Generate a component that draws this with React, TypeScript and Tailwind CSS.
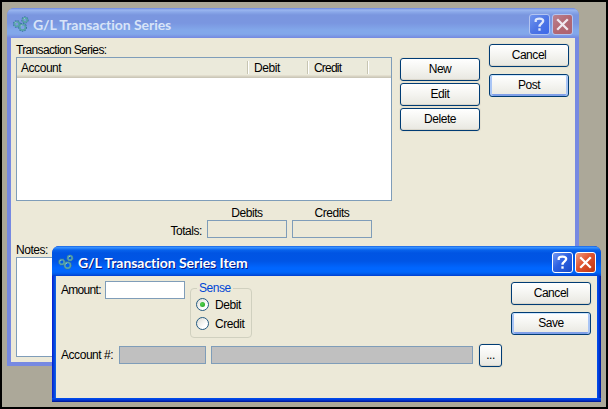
import React from "react";

const raised =
  "flex h-[23px] shrink-0 items-center justify-center rounded-[3px] border border-[#003c74] bg-gradient-to-b from-white via-[#f4f4f0] to-[#e8e7e0] pb-px text-black";

function Button({ label, focused = false, className = "w-[80px]" }: { label: string; focused?: boolean; className?: string }) {
  return (
    <button
      className={`${raised} ${className} ${
        focused
          ? "shadow-[inset_0_1px_0_#cee7ff,inset_2px_0_0_#a9c5f5,inset_-2px_0_0_#a9c5f5,inset_0_-2px_0_#7f9fe8]"
          : "shadow-[inset_0_-1px_0_#d9d6cb,0_0_0_1px_#e4e0d0]"
      }`}
    >
      {label}
    </button>
  );
}

function Gears() {
  return (
    <svg width="16" height="16" viewBox="0 0 16 16" fill="none">
      <g stroke="#34709a" strokeWidth="1.6" strokeDasharray="1.5 0.9">
        <circle cx="3.8" cy="8" r="3" />
        <circle cx="12" cy="4" r="2.8" />
        <circle cx="9.6" cy="11.3" r="3.6" />
      </g>
      <g stroke="#56a3a8" strokeWidth="1.6">
        <circle cx="3.8" cy="8" r="2.3" />
        <circle cx="12" cy="4" r="2.1" />
        <circle cx="9.6" cy="11.3" r="2.8" />
      </g>
      <path d="M2.1 7.2l1.1-1.1M7.6 10.3l1.3-1.5M10.7 3.2l1.3-1" stroke="#9acdc6" />
    </svg>
  );
}

function Caption({ title, active, titleClass }: { title: string; active: boolean; titleClass: string }) {
  const edge = active ? "border-white" : "border-[#b3c4f0]";
  return (
    <div
      className={`flex h-[30px] shrink-0 items-center rounded-t-[6px] pl-[6px] ${
        active
          ? "bg-[linear-gradient(#0a4fd8_0px,#3b95ff_1px,#3089fb_2px,#0863ec_4px,#0054e3_7px,#0055e5_15px,#0066ff_22px,#0066fc_26px,#005ae8_28px,#003dd0_30px)] pr-[5px]"
          : "bg-[linear-gradient(#6885e2_0px,#9ab6ef_2px,#8aa8e9_4px,#7a96df_7px,#7a96e0_15px,#82a7ea_22px,#82a7ea_26px,#7b98e5_28px,#7488df_30px)] pr-[6px]"
      }`}
    >
      <span className="mt-[2px]">
        <Gears />
      </span>
      <span
        className={`ml-[4px] mt-[4px] grow whitespace-nowrap font-['Lato','DejaVu_Sans_Condensed',sans-serif] text-[14px] leading-4 font-bold ${
          active ? "text-white [text-shadow:1px_1px_0_#0a1883]" : "text-[#d8e4f8]"
        } ${titleClass}`}
      >
        {title}
      </span>
      <div className="mt-[3px] flex gap-[2px]">
        <button
          className={`flex size-[21px] items-center justify-center rounded-[3px] border ${edge} ${
            active
              ? "bg-[linear-gradient(135deg,#7398f3,#2e62e2_45%,#1849c7)]"
              : "bg-[linear-gradient(135deg,#7195ee,#4e76e5_50%,#3d68e9)]"
          }`}
        >
          <svg width="19" height="19" viewBox="0 0 19 19" fill="none" stroke={active ? "white" : "#e0e8fc"} strokeWidth="2.3">
            <path d="M5.7 7V5.5C5.7 4.1 7.2 3.7 9.4 3.7S13.2 4.4 13.2 6.1C13.2 8.4 9.5 8.5 9.5 11.7" />
            <path d="M9.5 13.3v2.4" />
          </svg>
        </button>
        <button
          className={`flex size-[21px] items-center justify-center rounded-[3px] border ${edge} ${
            active
              ? "bg-[linear-gradient(135deg,#ee9c83,#e0532e_45%,#be3611)]"
              : "bg-[linear-gradient(135deg,#bb8291,#b26873_50%,#ad6272)]"
          }`}
        >
          <svg width="19" height="19" viewBox="0 0 19 19" fill="none" stroke={active ? "white" : "#f0e8f0"} strokeWidth="2.3">
            <path d="M4.2 4.2l10.6 10.6M14.8 4.2L4.2 14.8" />
          </svg>
        </button>
      </div>
    </div>
  );
}

function Radio({ label, checked = false }: { label: string; checked?: boolean }) {
  return (
    <label className="flex h-[19px] items-center gap-[6px]">
      <span className="flex size-[13px] items-center justify-center rounded-full border border-[#235a82] bg-[linear-gradient(135deg,#dcdcd4,#ffffff_70%)]">
        {checked && <span className="size-[5px] rounded-full bg-[radial-gradient(circle_at_40%_40%,#55d551,#1c991c)]" />}
      </span>
      <span>{label}</span>
    </label>
  );
}

function Column({ label, className }: { label: string; className: string }) {
  return (
    <div className={`flex h-full items-center ${className}`}>
      <span className="grow">{label}</span>
      <span className="h-[13px] w-[2px] border-r border-l border-r-white border-l-[#c7c5b2]" />
    </div>
  );
}

export default function App() {
  return (
    <div className="relative h-[409px] w-[608px] overflow-hidden border-2 border-black bg-[#aca899] pt-[6px] pl-[5px] font-['Liberation_Sans',Arial,sans-serif] text-[12px] leading-[14px] tracking-[-0.45px] text-black">
      <section className="flex h-[358px] w-[572px] flex-col overflow-hidden rounded-t-[7px] bg-[#7488df]">
        <Caption title="G/L Transaction Series" active={false} titleClass="tracking-[-0.05px]" />
        <div className="flex grow border-x-4 border-b-4 border-[#7689e2] bg-[#ece9d8]">
          <div className="flex w-[389px] shrink-0 flex-col pt-[5px] pl-[5px]">
            <span className="tracking-[-0.66px]">Transaction Series:</span>
            <div className="h-[144px] w-[376px] border border-[#7f9db9] bg-white">
              <div className="flex h-[20px] items-center border-b border-[#cbc7b8] bg-[#ebeadb] shadow-[inset_0_-1px_0_#d6d2c2,inset_0_-2px_0_#e2dece]">
                <Column label="Account" className="w-[232px] pl-[4px]" />
                <Column label="Debit" className="w-[60px] pl-[5px]" />
                <Column label="Credit" className="w-[60px] pl-[5px] tracking-[-0.8px]" />
              </div>
            </div>
            <div className="mt-[5px] flex gap-[5px] pl-[191px] text-center">
              <span className="w-[80px]">Debits</span>
              <span className="w-[80px]">Credits</span>
            </div>
            <div className="flex h-[18px] gap-[5px]">
              <span className="w-[186px] pt-[4px] text-right">Totals:</span>
              <div className="h-[18px] w-[80px] border border-[#7f9db9]" />
              <div className="h-[18px] w-[80px] border border-[#7f9db9]" />
            </div>
            <span className="mt-[5px]">Notes:</span>
            <div className="h-[100px] w-[376px] border border-[#7f9db9] bg-white" />
          </div>
          <div className="flex w-[80px] flex-col gap-[2px] pt-[20px]">
            <Button label="New" />
            <Button label="Edit" />
            <Button label="Delete" />
          </div>
          <div className="ml-[9px] flex flex-col gap-[7px] pt-[6px]">
            <Button label="Cancel" />
            <Button label="Post" focused />
          </div>
        </div>
      </section>

      <section className="absolute top-[244px] left-[50px] flex h-[156px] w-[549px] flex-col overflow-hidden rounded-t-[7px] bg-[#0038d4]">
        <Caption title="G/L Transaction Series Item" active titleClass="tracking-[-0.05px]" />
        <div className="grow bg-[linear-gradient(90deg,#0019cf_0px,#0831d9_1px,#0855dd_3px,#166aee_4px,transparent_4px,transparent_545px,#0050ee_545px,#0038d8_547px,#00138c_549px)] px-[4px]">
          <div className="flex h-[122px] flex-col bg-[#ece9d8]">
            <div className="flex h-[66px]">
              <span className="w-[49px] shrink-0 pt-[7px] pl-[5px] tracking-[-0.7px]">Amount:</span>
              <input className="mt-[5px] h-[18px] w-[80px] border border-[#7f9db9] bg-white" />
              <fieldset className="mt-[5px] ml-[5px] h-[57px] w-[62px] rounded-[4px] border border-[#d0d0bf] px-[5px]">
                <legend className="ml-[1px] px-[2px] text-[#0046d5]">Sense</legend>
                <div className="flex flex-col">
                  <Radio label="Debit" checked />
                  <Radio label="Credit" />
                </div>
              </fieldset>
              <div className="ml-auto flex flex-col gap-[7px] pt-[6px] pr-[6px]">
                <Button label="Cancel" />
                <Button label="Save" focused />
              </div>
            </div>
            <div className="flex pt-[2px]">
              <span className="w-[63px] pt-[4px] pl-[5px]">Account #:</span>
              <div className="mt-[2px] h-[18px] w-[87px] border border-[#7f9db9] bg-[#c0c0c0]" />
              <div className="mt-[2px] ml-[5px] h-[18px] w-[262px] border border-[#7f9db9] bg-[#c0c0c0]" />
              <Button label="..." className="ml-[6px] w-[23px]" />
            </div>
          </div>
          <div className="-mx-[4px] h-[4px] bg-[linear-gradient(#0050ee,#0038d8_50%,#00138c)]" />
        </div>
      </section>
    </div>
  );
}
